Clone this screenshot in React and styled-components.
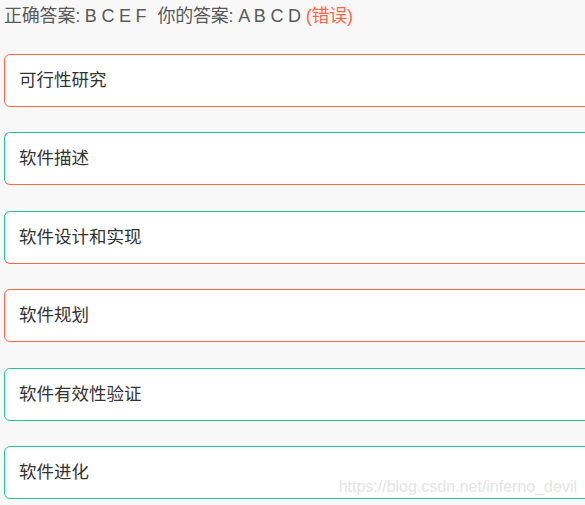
import React from "react";
import styled, { createGlobalStyle } from "styled-components";

const GlobalStyle = createGlobalStyle`
  html, body {
    margin: 0;
    padding: 0;
    background: #f8f8f8;
    overflow: hidden;
  }
  body {
    font-family: "Liberation Sans", "Noto Sans CJK SC", sans-serif;
  }
`;

const Page = styled.div`
  position: relative;
  width: 585px;
  height: 505px;
  padding-left: 4px;
  box-sizing: border-box;
  overflow: hidden;
`;

const Summary = styled.div`
  height: 32px;
  line-height: 32px;
  font-size: 18px;
  color: #5a5a5a;
  white-space: nowrap;
  letter-spacing: -0.2px;
`;

const Gap = styled.span`
  display: inline-block;
  width: 11px;
`;

const Wrong = styled.span`
  color: #ff6547;
`;

const Options = styled.div`
  margin-top: 22px;
  display: flex;
  flex-direction: column;
  gap: 25.4px;
  width: 640px;
`;

const colors = {
  red: "#ff6547",
  green: "#1cc39b",
};

const Option = styled.div`
  height: 53px;
  box-sizing: border-box;
  background: #fff;
  border: 1px solid ${(p) => colors[p.$tone]};
  border-bottom-color: ${(p) => colors[p.$bottom || p.$tone]};
  border-radius: 6px;
  display: flex;
  align-items: center;
  padding: 0 0 4px 14px;
  font-size: 17.5px;
  color: #333;
`;

const Watermark = styled.div`
  position: absolute;
  right: 8px;
  bottom: 9px;
  font-size: 16px;
  color: #e4e4e4;
  font-family: "Liberation Sans", sans-serif;
`;

const options = [
  { text: "可行性研究", tone: "red" },
  { text: "软件描述", tone: "green", bottom: "red" },
  { text: "软件设计和实现", tone: "green", bottom: "red" },
  { text: "软件规划", tone: "red" },
  { text: "软件有效性验证", tone: "green" },
  { text: "软件进化", tone: "green" },
];

const App = () => {
  return (
    <Page>
      <GlobalStyle />
      <Summary>
        正确答案: B C E F<Gap />你的答案: A B C D <Wrong>(错误)</Wrong>
      </Summary>
      <Options>
        {options.map((o) => (
          <Option key={o.text} $tone={o.tone} $bottom={o.bottom}>
            {o.text}
          </Option>
        ))}
      </Options>
      <Watermark>https://blog.csdn.net/inferno_devil</Watermark>
    </Page>
  );
};

export default App;
